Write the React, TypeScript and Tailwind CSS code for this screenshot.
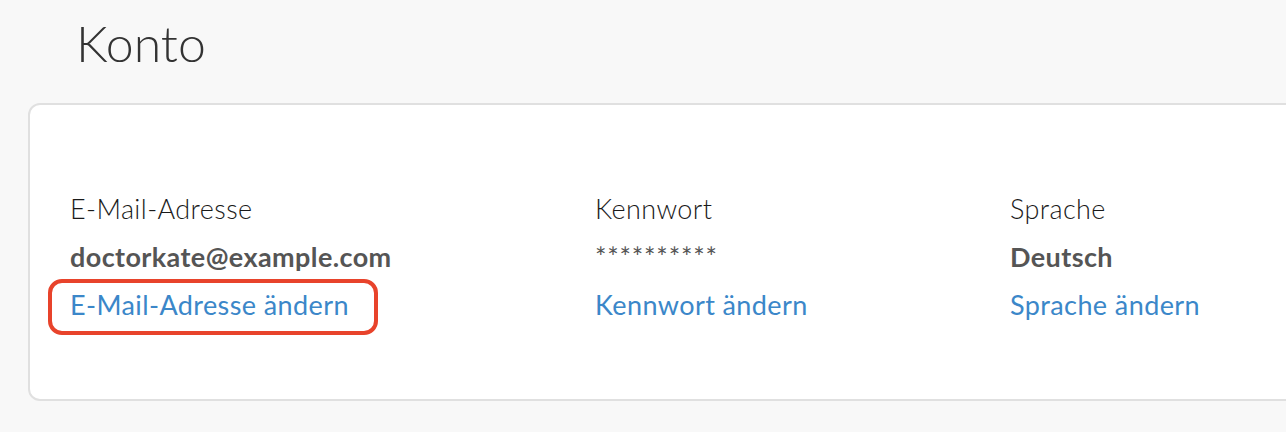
export default function App() {
  const cols = [
    { label: "E-Mail-Adresse", value: "doctorkate@example.com", link: "E-Mail-Adresse ändern", highlight: true },
    { label: "Kennwort", value: "**********", link: "Kennwort ändern", secret: true },
    { label: "Sprache", value: "Deutsch", link: "Sprache ändern" },
  ];

  return (
    <div className="min-h-[432px] overflow-hidden bg-[#f8f8f8] font-['Lato',sans-serif]">
      <h1 className="pl-[76px] pt-[18px] text-[50px] font-light leading-[50px] text-[#333]">Konto</h1>

      <div className="-mr-6 ml-[28px] mt-[35px] rounded-[12px] border-2 border-[#e0e0e0] bg-white pb-[70px] pl-[40px] pt-[80px]">
        <div className="grid grid-cols-[525px_415px_1fr]">
          {cols.map((c) => (
            <div key={c.label} className="flex flex-col text-[27px] leading-[48px] tracking-[0.4px]">
              <span className="font-light text-[#1a1a1a]">{c.label}</span>
              {c.secret ? (
                <span className="font-normal tracking-[0.8px] text-[#555]">{c.value}</span>
              ) : (
                <span className="font-bold text-[#555]">{c.value}</span>
              )}
              <span className="relative self-start">
                <a href="#" className="text-[#3b87c9]">{c.link}</a>
                {c.highlight && (
                  <span className="pointer-events-none absolute -bottom-[6px] -left-[22px] -right-[29px] -top-[2px] rounded-[14px] border-4 border-[#e8432b]" />
                )}
              </span>
            </div>
          ))}
        </div>
      </div>
    </div>
  );
}
